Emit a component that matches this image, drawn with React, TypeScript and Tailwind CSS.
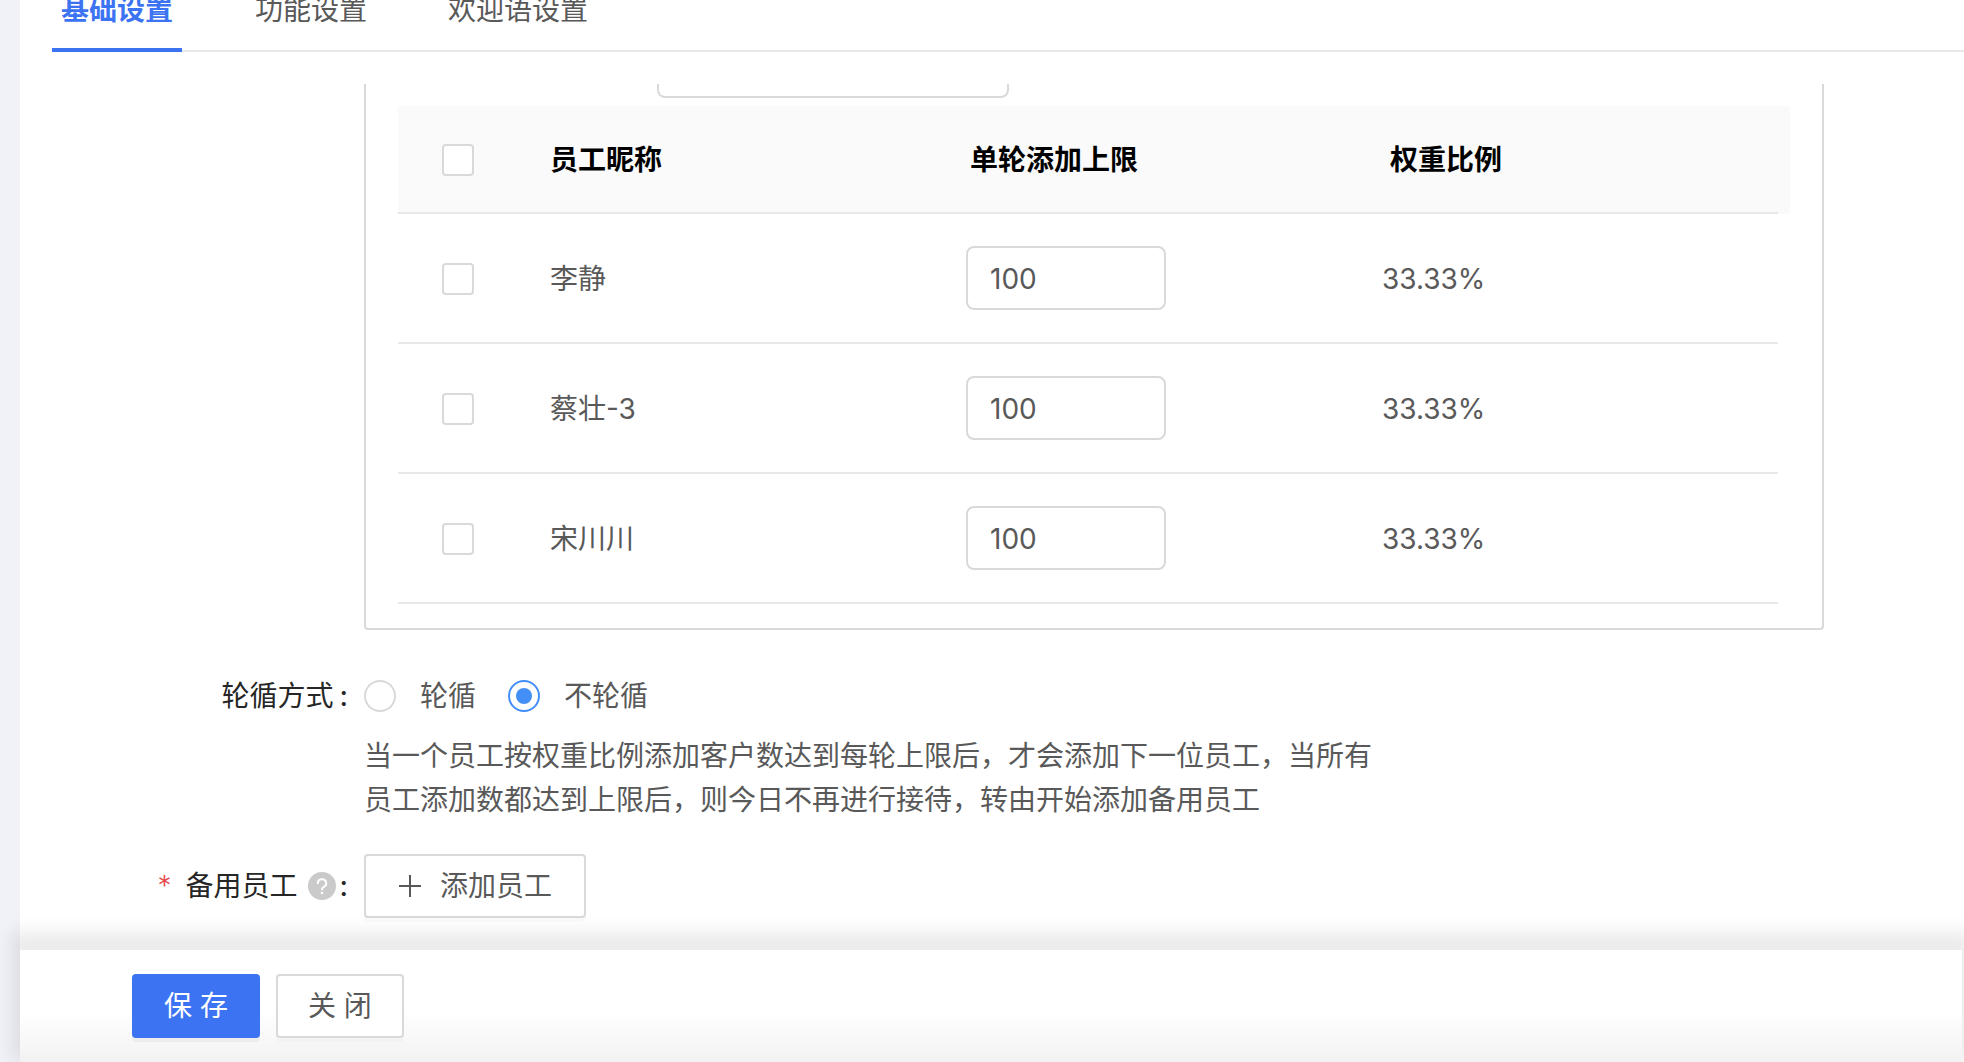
import { useState } from "react";

const tabs = ["基础设置", "功能设置", "欢迎语设置"];

const staff = [
  { id: "lj", name: "李静", limit: "100", ratio: "33.33%" },
  { id: "cz", name: "蔡壮-3", limit: "100", ratio: "33.33%" },
  { id: "scc", name: "宋川川", limit: "100", ratio: "33.33%" },
];

const checkboxClass =
  "block size-8 cursor-pointer appearance-none rounded-sm border-2 border-[#d9d9d9] bg-white checked:border-[#3c73f2] checked:bg-[#3c73f2]";

const radioClass =
  "grid size-8 shrink-0 cursor-pointer appearance-none place-items-center rounded-full border-2 border-[#d9d9d9] bg-white before:size-4 before:rounded-full checked:border-[#448ef7] checked:before:bg-[#448ef7]";

function Tabs() {
  return (
    <nav className="ml-8 flex h-[52px] shrink-0 items-end gap-16 border-b-2 border-[#e8e8e8]">
      {tabs.map((tab, index) => (
        <button
          key={tab}
          type="button"
          className={
            index === 0
              ? "-mb-0.5 min-w-[130px] border-b-4 border-[#3c73f2] px-2 pb-4.5 leading-10 font-bold text-[#3c73f2]"
              : "-mb-0.5 min-w-[130px] border-b-4 border-transparent px-2 pb-4.5 leading-10"
          }
        >
          {tab}
        </button>
      ))}
    </nav>
  );
}

function StaffTable() {
  return (
    <table className="w-full table-fixed border-separate border-spacing-0 text-left">
      <colgroup>
        <col className="w-[120px]" />
        <col className="w-[420px]" />
        <col className="w-[420px]" />
        <col />
        <col className="w-3" />
      </colgroup>
      <thead>
        <tr className="h-[108px] bg-[#fafafa] text-black">
          <th className="border-b-2 border-[#e8e8e8] pt-0.5 pl-11">
            <input type="checkbox" aria-label="全选" className={checkboxClass} />
          </th>
          <th className="border-b-2 border-[#e8e8e8] pt-0.5 pl-8 font-bold">员工昵称</th>
          <th className="border-b-2 border-[#e8e8e8] pt-0.5 pl-8 font-bold">单轮添加上限</th>
          <th className="border-b-2 border-[#e8e8e8] pt-0.5 pl-8 font-bold">权重比例</th>
          <td />
        </tr>
      </thead>
      <tbody>
        {staff.map((person) => (
          <tr key={person.id} className="h-[130px]">
            <td className="border-b-2 border-[#e8e8e8] pt-0.5 pl-11">
              <input type="checkbox" aria-label={person.name} className={checkboxClass} />
            </td>
            <td className="border-b-2 border-[#e8e8e8] pt-0.5 pl-8">{person.name}</td>
            <td className="border-b-2 border-[#e8e8e8] pl-7">
              <input
                type="text"
                aria-label={`${person.name} 单轮添加上限`}
                defaultValue={person.limit}
                className="block h-16 w-[200px] rounded-lg border-2 border-[#d9d9d9] px-[22px] pt-0.5"
              />
            </td>
            <td className="border-b-2 border-[#e8e8e8] pt-0.5 pl-6">{person.ratio}</td>
            <td />
          </tr>
        ))}
      </tbody>
    </table>
  );
}

function HelpIcon() {
  return (
    <svg viewBox="0 0 28 28" className="size-7" role="img" aria-label="说明">
      <circle cx="14" cy="14" r="14" fill="#cacaca" />
      <path
        d="M9.8 11.2a4.2 4 0 1 1 6 3.6c-1.2.6-1.8 1.3-1.8 2.8"
        fill="none"
        stroke="#fff"
        strokeWidth="2"
        strokeLinecap="round"
      />
      <circle cx="14" cy="21" r="1.3" fill="#fff" />
    </svg>
  );
}

function Footer() {
  return (
    <footer className="relative mr-0.5 flex h-28 shrink-0 items-start gap-4 bg-linear-to-b from-white from-55% to-[#f2f2f2] pt-6 pl-28 shadow-[0_-10px_16px_9px_rgba(0,0,0,0.08)]">
      <button
        type="button"
        className="h-16 rounded-sm bg-[#3c73f2] px-8 text-white shadow-[0_4px_0_rgba(0,0,0,0.04)]"
      >
        保 存
      </button>
      <button
        type="button"
        className="h-16 rounded-sm border-2 border-[#d9d9d9] bg-white px-[30px] shadow-[0_4px_0_rgba(0,0,0,0.02)]"
      >
        关 闭
      </button>
    </footer>
  );
}

export default function App() {
  const [mode, setMode] = useState("fixed");

  return (
    <div className="flex h-screen flex-col overflow-hidden bg-[#f0f2f7] pl-5 font-[Inter,'Noto_Sans_CJK_SC',sans-serif] text-[28px] leading-11 text-[#595959]">
      <div className="flex min-h-0 flex-1 flex-col bg-white">
        <Tabs />
        <main className="mt-8 flex min-h-0 flex-1 flex-col overflow-hidden pl-[344px]">
          <section className="mr-[140px] flex shrink-0 flex-col rounded-b-sm border-2 border-t-0 border-[#d9d9d9] px-8 pb-6">
            <input
              type="text"
              aria-label="搜索员工"
              className="mb-2 ml-[259px] h-[14px] w-[352px] rounded-b-lg border-2 border-t-0 border-[#d9d9d9]"
            />
            <StaffTable />
          </section>

          <fieldset className="mt-11 -ml-[344px] flex shrink-0 items-center">
            <legend className="sr-only">轮循方式</legend>
            <span className="flex w-[344px] justify-end gap-1.5 pr-4 text-[#262626]">
              轮循方式<span className="font-medium">:</span>
            </span>
            <label className="flex items-center gap-6">
              <input
                type="radio"
                name="mode"
                checked={mode === "loop"}
                onChange={() => setMode("loop")}
                className={radioClass}
              />
              轮循
            </label>
            <label className="ml-8 flex items-center gap-6">
              <input
                type="radio"
                name="mode"
                checked={mode === "fixed"}
                onChange={() => setMode("fixed")}
                className={radioClass}
              />
              不轮循
            </label>
          </fieldset>

          <p className="mt-4 max-w-[1030px] shrink-0">
            当一个员工按权重比例添加客户数达到每轮上限后，才会添加下一位员工，当所有员工添加数都达到上限后，则今日不再进行接待，转由开始添加备用员工
          </p>

          <div className="mt-8 -ml-[344px] flex shrink-0 items-center">
            <div className="flex w-[344px] items-center justify-end pr-4 text-[#262626]">
              <span className="mr-3.5 font-light text-[#e84749]">*</span>
              备用员工
              <span className="mr-1 ml-2.5">
                <HelpIcon />
              </span>
              <span className="font-medium">:</span>
            </div>
            <button
              type="button"
              className="flex h-16 items-center gap-[18px] rounded-sm border-2 border-[#d9d9d9] bg-white px-8 shadow-[0_4px_0_rgba(0,0,0,0.02)]"
            >
              <svg viewBox="0 0 24 24" className="size-6" aria-hidden="true">
                <path d="M12 1v22M1 12h22" stroke="currentColor" strokeWidth="2" />
              </svg>
              添加员工
            </button>
          </div>
        </main>
        <Footer />
      </div>
    </div>
  );
}
